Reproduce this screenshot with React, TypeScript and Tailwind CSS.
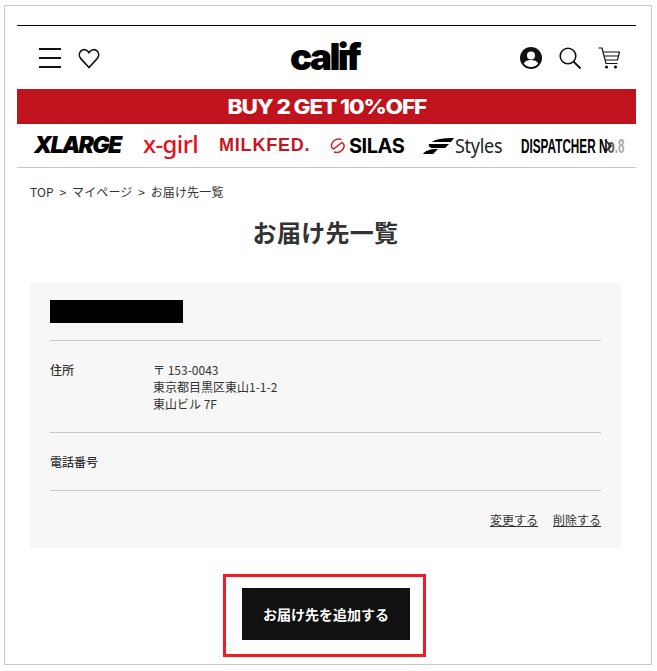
import React from 'react';

const jp = "font-['Noto_Sans_CJK_JP','Noto_Sans',sans-serif]";

function Header() {
  return (
    <div className="flex h-[63px] items-center justify-between pr-[16px] pl-[22px]">
      <div className="flex w-[140px] items-center gap-[17px]">
        <svg width="22" height="22" viewBox="0 0 22 22" fill="none" stroke="#111" strokeWidth="2">
          <path d="M0 2h22M0 11h22M0 20h22" />
        </svg>
        <svg width="22" height="22" viewBox="0 0 22 22" fill="none" stroke="#111" strokeWidth="1.700">
          <path d="M11 20.500 3 11.800C.8 9.400.9 6 2.900 4c2.200-2 5.800-1.800 8.100 1.500C13.300 2.200 16.900 2 19.100 4c2 2 2.100 5.400-.100 7.800z" />
        </svg>
      </div>
      <div className="mt-[-2px] ml-[-10px] font-['Inter',sans-serif] text-[37px] leading-none font-black tracking-[-2.7px] text-black">
        calif
      </div>
      <div className="flex w-[140px] items-center justify-end gap-[17px]">
        <svg width="22" height="22" viewBox="0 0 22 22">
          <circle cx="11" cy="11" r="11" fill="#111" />
          <circle cx="11" cy="8.500" r="4" fill="#fff" />
          <path d="M3.800 16.500c1.500-2.600 4-3.500 7.200-3.500s5.700.9 7.200 3.500C16.500 18.800 14 20 11 20s-5.500-1.200-7.200-3.500z" fill="#fff" />
        </svg>
        <svg width="22" height="22" viewBox="0 0 22 22" fill="none" stroke="#111" strokeWidth="1.600">
          <circle cx="9" cy="9" r="7.800" />
          <path d="M14.600 14.600 21.500 21.500" strokeWidth="2" />
        </svg>
        <svg width="22" height="22" viewBox="0 0 22 22" fill="none" stroke="#111" strokeWidth="1.200">
          <path d="M.5 1H4l4 15.500h11.500" />
          <path d="M5 5h16.500l-2 8H7M6 9h15" />
          <circle cx="8.500" cy="20" r="1.600" fill="#111" stroke="none" />
          <circle cx="17.500" cy="20" r="1.600" fill="#111" stroke="none" />
        </svg>
      </div>
    </div>
  );
}

function Brands() {
  return (
    <div className="relative flex h-[44px] items-center overflow-hidden border-b border-[#c8c8c8] pl-[17px] whitespace-nowrap">
      <span className="w-[109px] shrink-0 font-['Inter',sans-serif] text-[23px] font-black tracking-[-1.6px] text-black italic">XLARGE</span>
      <span className="mt-[-4px] w-[76px] shrink-0 font-['Noto_Sans',sans-serif] text-[24px] leading-none font-medium tracking-[-0.6px] text-[#e60f20]">x-girl</span>
      <span className="w-[110px] shrink-0 font-['Liberation_Sans',sans-serif] text-[18px] font-bold tracking-[0.8px] text-[#c8141e]">MILKFED.</span>
      <span className="flex w-[94px] shrink-0 items-center gap-[2px]">
        <svg width="18" height="18" viewBox="0 0 18 18" fill="none" stroke="#d2232a" strokeWidth="1.500">
          <path d="M12.500 2.500C8 1 3.500 3.500 2.500 7.500c-.5 2 .5 3.500 2 4.500L13 5.500c1.500 1 2.500 2.500 2 4.500-1 4-5.500 6.500-10 5" />
        </svg>
        <span className="w-[54px] font-['Inter',sans-serif] text-[20px] font-bold tracking-[-0.5px] text-black">SILAS</span>
      </span>
      <span className="flex w-[98px] shrink-0 items-center gap-[1px]">
        <svg width="31" height="16" viewBox="0 0 31 16" fill="#000">
          <path d="M9 4C13 1 20 0 31 0l-3 4zM6 6h20l-4 4H10C8 10 5 9 6 6zM0 16c2-3 6-5 15-5l-5 5z" />
        </svg>
        <span className="origin-left scale-x-[0.9] font-['Noto_Sans',sans-serif] text-[20px] tracking-[-0.3px] text-[#222]">Styles</span>
      </span>
      <span className="w-[104px] shrink-0 origin-left scale-x-[0.56] font-['Liberation_Sans',sans-serif] text-[21px] font-bold text-black">DISPATCHER N<span className="text-[#555]">o</span><span className="text-[#aaa]">.8</span></span>
      <span className="absolute top-0 right-[24px] bottom-0 flex items-center">
        <svg width="8" height="14" viewBox="0 0 8 14" fill="none" stroke="#222" strokeWidth="1.600">
          <path d="M1 1l6 6-6 6" />
        </svg>
      </span>
    </div>
  );
}

export default function App() {
  return (
    <div className={`min-h-[671px] bg-white pt-[5px] pl-[4px] text-[#333] ${jp}`}>
      <div className="h-[660px] w-[648px] border border-[#c8c8c8] pt-[19px] pr-[15px] pl-[12px]">
        <div className="border-t border-black">
          <Header />
          <div className="flex h-[35px] items-center justify-center bg-[#bf141e]">
            <span className="scale-x-[1.13] font-['Inter',sans-serif] text-[20px] font-extrabold tracking-[-1px] text-white">BUY 2 GET 10%OFF</span>
          </div>
          <Brands />
        </div>

        <div className="pt-[15px] pl-[13px] text-[12px] leading-[18px] tracking-[0.15px] text-[#333]">
          TOP&nbsp; &gt; &nbsp;マイページ&nbsp; &gt; &nbsp;お届け先一覧
        </div>
        <h1 className="mt-[14px] mr-[2px] text-center text-[24px] leading-[34px] font-bold tracking-[0.3px] text-[#333]">お届け先一覧</h1>

        <div className="mt-[34px] mr-[15px] ml-[13px] h-[265px] bg-[#f7f7f7] px-[20px] pt-[17px]">
          <div className="h-[23px] w-[133px] bg-black" />
          <div className="mt-[17px] flex h-[92px] border-t border-[#c8c8c8] pt-[20px] text-[12px] leading-[17px]">
            <div className="w-[103px] font-medium">住所</div>
            <div>
              〒 153-0043<br />東京都目黒区東山1-1-2<br />東山ビル 7F
            </div>
          </div>
          <div className="flex h-[58px] border-t border-[#c8c8c8] pt-[20px] text-[12px] leading-[17px]">
            <div className="w-[103px] font-medium">電話番号</div>
          </div>
          <div className="flex justify-end gap-[15px] border-t border-[#c8c8c8] pt-[20px] text-[12px] leading-[17px]">
            <a className="underline">変更する</a>
            <a className="underline">削除する</a>
          </div>
        </div>

        <div className="mt-[26px] flex justify-center">
          <div className="mr-[4px] border-[3px] border-[#ee1c25] pt-[11px] pr-[13px] pb-[14px] pl-[16px]">
            <button className="block h-[52px] w-[168px] bg-[#111] text-[14px] font-bold text-white">お届け先を追加する</button>
          </div>
        </div>
      </div>
    </div>
  );
}
